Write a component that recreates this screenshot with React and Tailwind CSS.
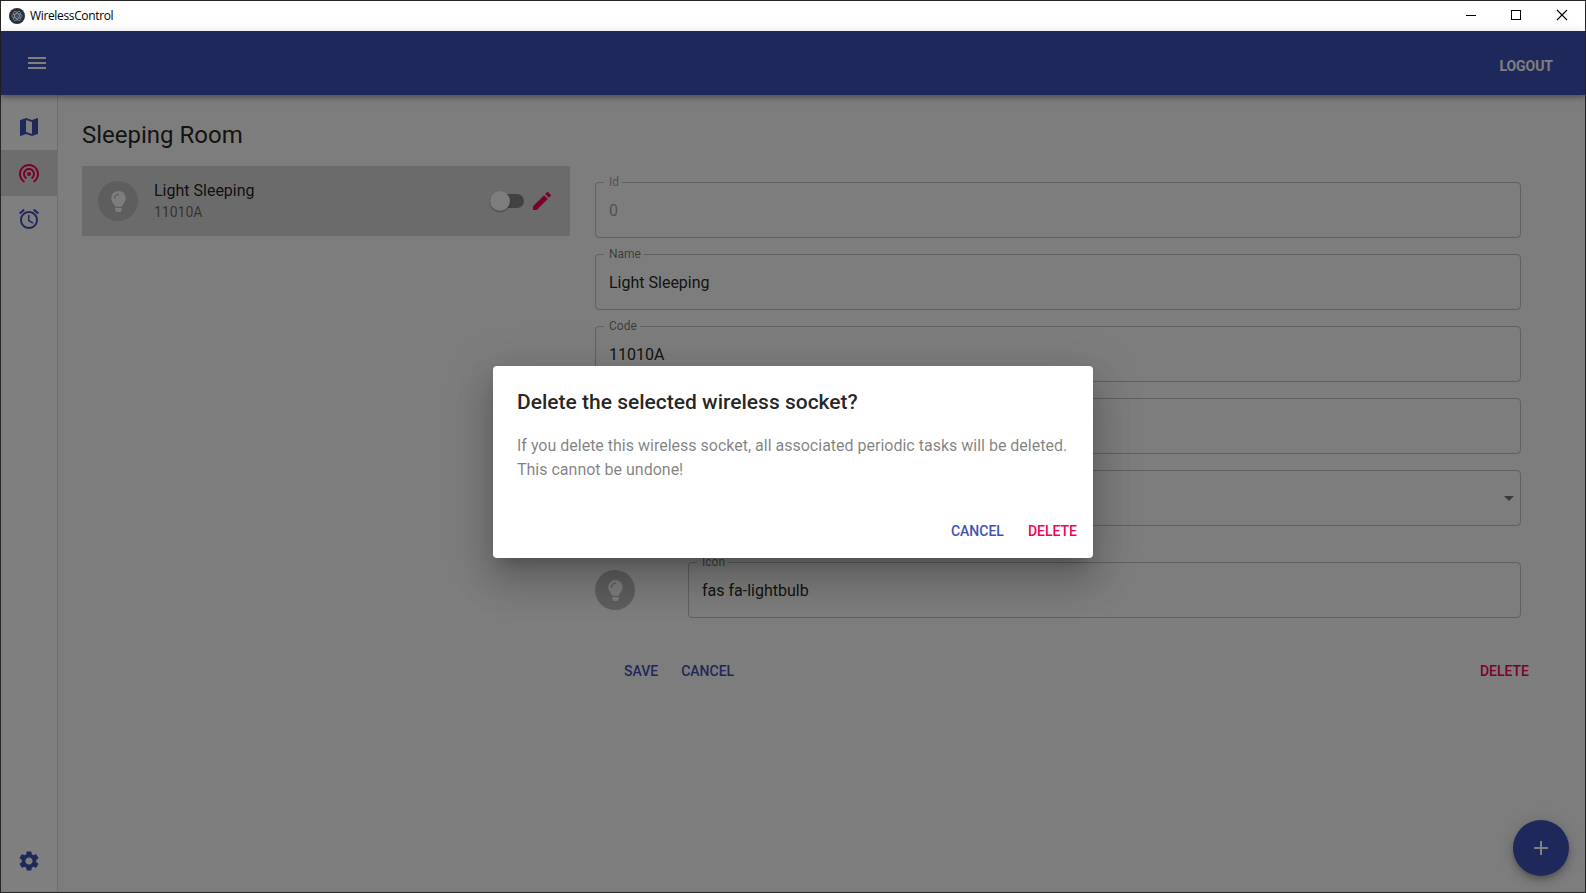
import React from "react";
import { FaLightbulb } from "react-icons/fa";

const PATHS = {
  menu: "M3 18h18v-2H3v2zm0-5h18v-2H3v2zm0-7v2h18V6H3z",
  map: "M20.5 3l-.16.03L15 5.1 9 3 3.36 4.9c-.21.07-.36.25-.36.48V20.5c0 .28.22.5.5.5l.16-.03L9 18.9l6 2.1 5.64-1.9c.21-.07.36-.25.36-.48V3.5c0-.28-.22-.5-.5-.5zM15 19l-6-2.11V5l6 2.11V19z",
  tethering:
    "M12 11c-1.1 0-2 .9-2 2s.9 2 2 2 2-.9 2-2-.9-2-2-2zm6 2c0-3.31-2.69-6-6-6s-6 2.69-6 6c0 2.22 1.21 4.15 3 5.19l1-1.74c-1.19-.7-2-1.97-2-3.45 0-2.21 1.79-4 4-4s4 1.79 4 4c0 1.48-.81 2.75-2 3.45l1 1.74c1.79-1.04 3-2.97 3-5.19zM12 3C6.48 3 2 7.48 2 13c0 3.7 2.01 6.92 4.99 8.65l1-1.73C5.61 18.53 4 15.96 4 13c0-4.42 3.58-8 8-8s8 3.58 8 8c0 2.96-1.61 5.53-4 6.92l1 1.73c2.99-1.73 5-4.95 5-8.65 0-5.52-4.48-10-10-10z",
  alarm:
    "M22 5.72l-4.6-3.86-1.29 1.53 4.6 3.86L22 5.72zM7.88 3.39L6.6 1.86 2 5.71l1.29 1.53 4.59-3.85zM12.5 8H11v6l4.75 2.85.75-1.23-4-2.37V8zM12 4c-4.97 0-9 4.03-9 9s4.02 9 9 9c4.97 0 9-4.03 9-9s-4.03-9-9-9zm0 16c-3.87 0-7-3.13-7-7s3.13-7 7-7 7 3.13 7 7-3.13 7-7 7z",
  settings:
    "M19.14 12.94c.04-.3.06-.61.06-.94 0-.32-.02-.64-.07-.94l2.03-1.58c.18-.14.23-.41.12-.61l-1.92-3.32c-.12-.22-.37-.29-.59-.22l-2.39.96c-.5-.38-1.03-.7-1.62-.94l-.36-2.54c-.04-.24-.24-.41-.48-.41h-3.84c-.24 0-.43.17-.47.41l-.36 2.54c-.59.24-1.13.57-1.62.94l-2.39-.96c-.22-.08-.47 0-.59.22L2.74 8.87c-.12.21-.08.47.12.61l2.03 1.58c-.05.3-.09.63-.09.94s.02.64.07.94l-2.03 1.58c-.18.14-.23.41-.12.61l1.92 3.32c.12.22.37.29.59.22l2.39-.96c.5.38 1.03.7 1.62.94l.36 2.54c.05.24.24.41.48.41h3.84c.24 0 .44-.17.47-.41l.36-2.54c.59-.24 1.13-.56 1.62-.94l2.39.96c.22.08.47 0 .59-.22l1.92-3.32c.12-.22.07-.47-.12-.61l-2.01-1.58zM12 15.6c-1.98 0-3.6-1.62-3.6-3.6s1.62-3.6 3.6-3.6 3.6 1.62 3.6 3.6-1.62 3.6-3.6 3.6z",
  edit: "M3 17.25V21h3.75L17.81 9.94l-3.75-3.75L3 17.25zM20.71 7.04c.39-.39.39-1.02 0-1.41l-2.34-2.34a.9959.9959 0 0 0-1.41 0l-1.83 1.83 3.75 3.75 1.83-1.83z",
  add: "M19 13h-6v6h-2v-6H5v-2h6V5h2v6h6v2z",
  dropdown: "M7 10l5 5 5-5z",
};

function Icon({ name, className = "" }) {
  return (
    <svg viewBox="0 0 24 24" fill="currentColor" className={`size-6 shrink-0 ${className}`}>
      <path d={PATHS[name]} />
    </svg>
  );
}

function AppLogo() {
  return (
    <svg viewBox="0 0 16 16" className="size-4 shrink-0">
      <circle cx="8" cy="8" r="8" fill="#2b2e3a" />
      <g fill="none" stroke="#a9cdd8" strokeWidth="0.6" opacity="0.85">
        <ellipse cx="8" cy="8" rx="5.2" ry="2.2" />
        <ellipse cx="8" cy="8" rx="5.2" ry="2.2" transform="rotate(60 8 8)" />
        <ellipse cx="8" cy="8" rx="5.2" ry="2.2" transform="rotate(120 8 8)" />
      </g>
      <circle cx="8" cy="8" r="0.6" fill="#a9cdd8" />
    </svg>
  );
}

function TitleBar() {
  return (
    <header className="flex h-[30px] shrink-0 items-center bg-white pl-2 text-black">
      <AppLogo />
      <span className="ml-[5px] grow font-['Open_Sans',sans-serif] text-[12px] leading-4 tracking-[-0.35px]">
        WirelessControl
      </span>
      <div className="-mr-px flex w-[138px] items-center">
        <svg viewBox="0 0 46 30" className="h-[30px] w-[46px]" shapeRendering="crispEdges">
          <path d="M18 14.5h10" stroke="#000" />
        </svg>
        <svg viewBox="0 0 46 30" className="h-[30px] w-[46px]" shapeRendering="crispEdges">
          <rect x="17.5" y="9.5" width="9" height="9" fill="none" stroke="#000" />
        </svg>
        <svg viewBox="0 0 46 30" className="h-[30px] w-[46px]">
          <path d="M17 9l10 10M27 9l-10 10" stroke="#000" strokeWidth="1.1" />
        </svg>
      </div>
    </header>
  );
}

function NavItem({ icon, active }) {
  return (
    <a className={`flex h-[46px] items-center pl-4 ${active ? "bg-[#dbdbdb] text-[#f50057]" : "text-[#3f51b5]"}`}>
      <Icon name={icon} />
    </a>
  );
}

function BulbAvatar() {
  return (
    <span className="flex size-10 shrink-0 items-center justify-center rounded-full bg-[#bdbdbd] text-[#fafafa]">
      <FaLightbulb className="size-[21px]" />
    </span>
  );
}

function Field({ label, value, muted, className = "" }) {
  return (
    <fieldset className={`flex h-[62px] min-w-0 rounded border border-black/23 px-2 ${className}`}>
      <legend
        className={`h-3 pl-[5px] pr-[3px] text-[12px] leading-3 ${muted ? "text-black/38" : "text-black/54"}`}
      >
        {label}
      </legend>
      <div
        className={`flex h-[46px] grow items-center px-[5px] text-[16px] ${muted ? "text-black/38" : "text-black/87"}`}
      >
        {value}
      </div>
    </fieldset>
  );
}

function EmptyField({ select }) {
  return (
    <div className="flex h-14 items-center justify-end rounded border border-black/23">
      {select && <Icon name="dropdown" className="-mr-px text-black/54" />}
    </div>
  );
}

function TextButton({ children, color = "text-[#3f51b5]" }) {
  return (
    <button className={`h-9 rounded px-2 text-[14px] font-medium leading-6 ${color}`}>
      {children}
    </button>
  );
}

function Switch() {
  return (
    <span className="flex h-3.5 w-[34px] items-center rounded-full bg-black/38">
      <span className="size-5 shrink-0 rounded-full bg-[#fafafa] shadow-[0_2px_1px_-1px_rgba(0,0,0,.2),0_1px_1px_0_rgba(0,0,0,.14),0_1px_3px_0_rgba(0,0,0,.12)]" />
    </span>
  );
}

function ConfirmDialog() {
  return (
    <div className="absolute inset-0 flex items-center justify-center bg-black/50">
      <section
        role="dialog"
        className="flex h-48 w-[600px] flex-col rounded bg-white shadow-[0_11px_15px_-7px_rgba(0,0,0,.2),0_24px_38px_3px_rgba(0,0,0,.14),0_9px_46px_8px_rgba(0,0,0,.12)]"
      >
        <h2 className="px-6 pt-5 text-[21px] font-medium leading-8 text-black/87">
          Delete the selected wireless socket?
        </h2>
        <p className="grow px-6 pt-4 text-[16px] leading-6 text-black/50">
          If you delete this wireless socket, all associated periodic tasks will be deleted. This cannot be undone!
        </p>
        <div className="flex justify-end gap-2 px-2 pb-[9px]">
          <TextButton>CANCEL</TextButton>
          <TextButton color="text-[#f50057]">DELETE</TextButton>
        </div>
      </section>
    </div>
  );
}

export default function App() {
  return (
    <div className="flex h-[893px] w-[1586px] flex-col border border-[#262626] bg-[#fafafa] font-[Roboto,sans-serif] text-black/87">
      <TitleBar />
      <div className="relative flex min-h-0 grow flex-col">
        <div className="z-0 flex h-16 shrink-0 justify-between bg-[#3f51b5] pl-6 pr-8 text-white shadow-[0_2px_4px_-1px_rgba(0,0,0,.2),0_4px_5px_0_rgba(0,0,0,.14),0_1px_10px_0_rgba(0,0,0,.12)]">
          <Icon name="menu" className="mt-5" />
          <button className="mt-[23px] h-6 text-[14px] font-bold leading-6 tracking-[-0.05px]">LOGOUT</button>
        </div>
        <div className="flex min-h-0 grow">
          <nav className="flex w-[57px] shrink-0 flex-col justify-between border-r border-black/12 bg-white pb-2 pt-[9px]">
            <div>
              <NavItem icon="map" />
              <NavItem icon="tethering" active />
              <NavItem icon="alarm" />
            </div>
            <NavItem icon="settings" />
          </nav>
          <main className="min-w-0 grow pl-6 pt-6">
            <h1 className="text-[24px] leading-8">Sleeping Room</h1>
            <div className="mt-[15px] flex items-start">
              <div className="flex h-[70px] w-[488px] items-center bg-[#d7d7d7] px-4">
                <BulbAvatar />
                <div className="ml-4 grow">
                  <div className="text-[16px] leading-6">Light Sleeping</div>
                  <div className="pb-0.5 text-[14px] leading-[18px] text-black/54">11010A</div>
                </div>
                <Switch />
                <Icon name="edit" className="ml-1.5 text-[#f50057]" />
              </div>
              <form className="ml-[25px] mt-2.5 w-[926px]">
                <div className="flex flex-col gap-2.5">
                  <Field label="Id" value="0" muted />
                  <Field label="Name" value="Light Sleeping" />
                  <Field label="Code" value="11010A" />
                </div>
                <div className="mt-4 flex flex-col gap-4">
                  <EmptyField />
                  <EmptyField select />
                </div>
                <div className="mt-[30px] flex h-[62px] items-end">
                  <span className="pb-2">
                    <BulbAvatar />
                  </span>
                  <Field label="Icon" value="fas fa-lightbulb" className="ml-[53px] grow" />
                </div>
                <div className="mt-[35px] flex pl-[21px]">
                  <TextButton>SAVE</TextButton>
                  <span className="ml-[7px] grow">
                    <TextButton>CANCEL</TextButton>
                  </span>
                  <span className="-mr-4">
                    <TextButton color="text-[#f50057]">DELETE</TextButton>
                  </span>
                </div>
              </form>
            </div>
          </main>
        </div>
        <button className="absolute bottom-4 right-4 flex size-14 items-center justify-center rounded-full bg-[#3f51b5] text-white shadow-[0_3px_5px_-1px_rgba(0,0,0,.2),0_6px_10px_0_rgba(0,0,0,.14),0_1px_18px_0_rgba(0,0,0,.12)]">
          <Icon name="add" />
        </button>
        <ConfirmDialog />
      </div>
    </div>
  );
}
